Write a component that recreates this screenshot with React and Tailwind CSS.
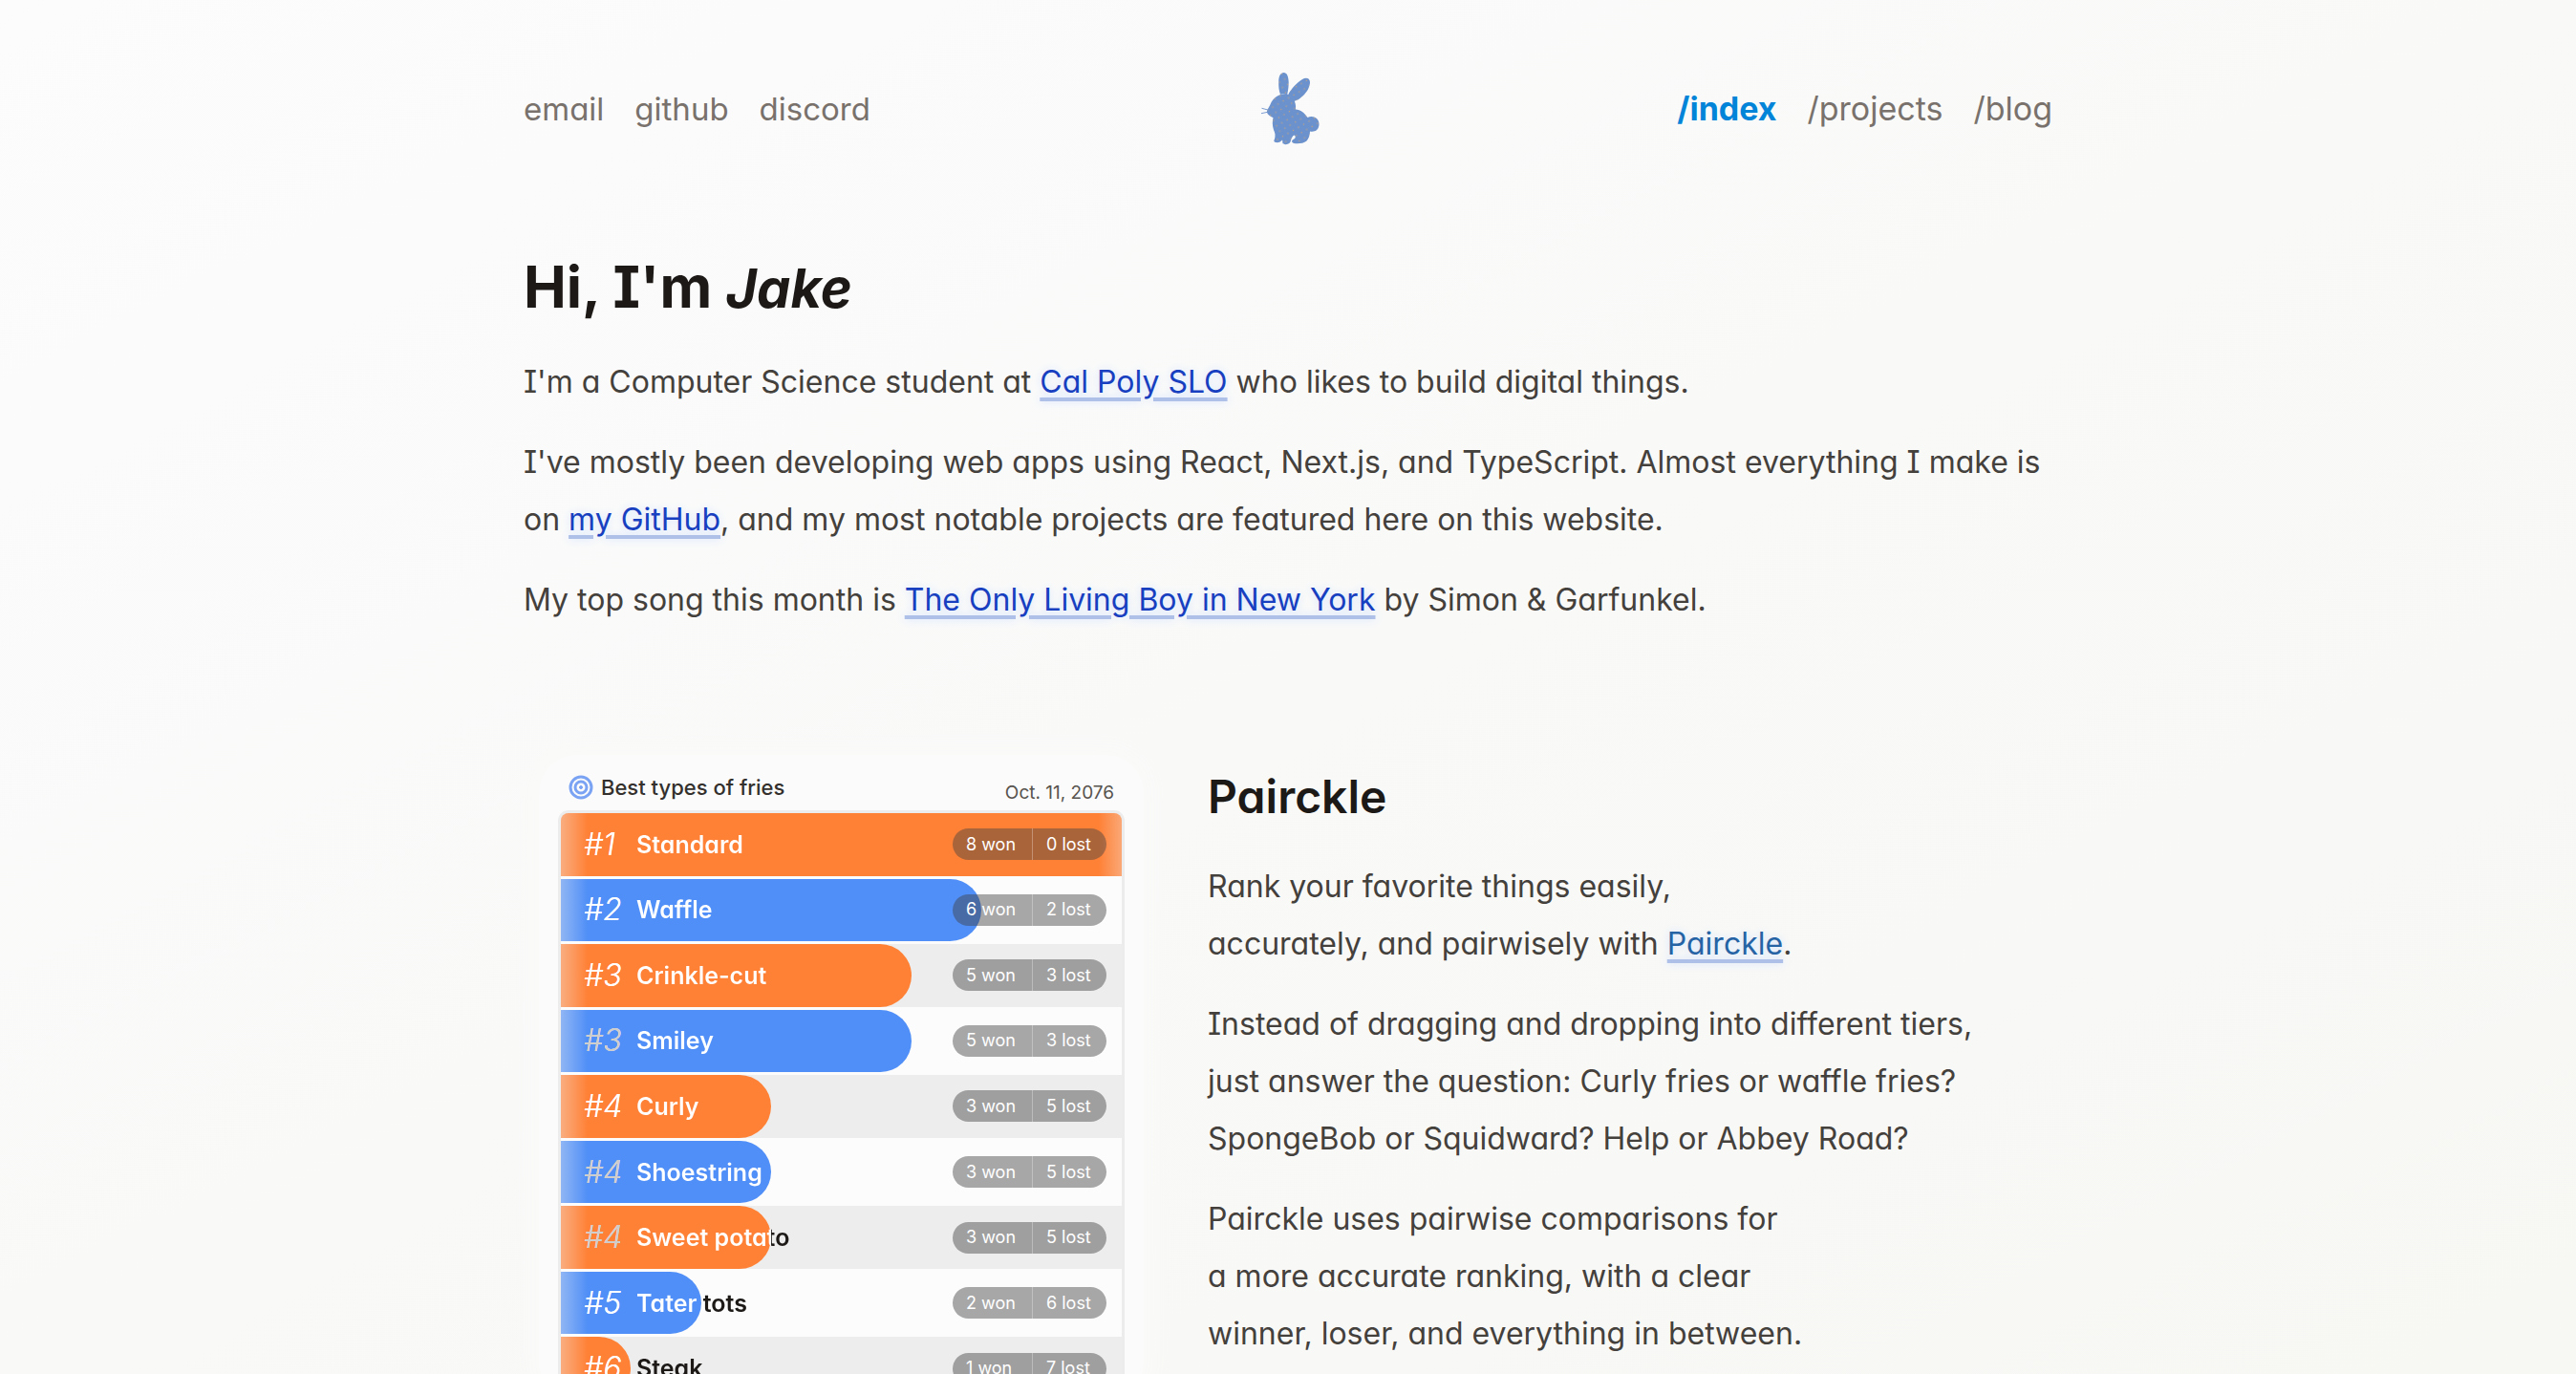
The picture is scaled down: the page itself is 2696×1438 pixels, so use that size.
import clsx from "clsx";

const fries = [
  { rank: 1, name: "Standard", won: 8 },
  { rank: 2, name: "Waffle", won: 6 },
  { rank: 3, name: "Crinkle-cut", won: 5 },
  { rank: 3, name: "Smiley", won: 5 },
  { rank: 4, name: "Curly", won: 3 },
  { rank: 4, name: "Shoestring", won: 3 },
  { rank: 4, name: "Sweet potato", won: 3 },
  { rank: 5, name: "Tater tots", won: 2 },
  { rank: 6, name: "Steak", won: 1 },
];

const ROUNDS = 8;

function Rabbit() {
  return (
    <svg viewBox="-2 0 100 100" className="size-[100px]" aria-hidden="true">
      <defs>
        <pattern id="dots" width="9" height="9" patternUnits="userSpaceOnUse" patternTransform="rotate(15)">
          <rect width="9" height="9" fill="#6c92cd" />
          <circle cx="2" cy="2" r="0.7" fill="#c4a27c" />
          <circle cx="6.5" cy="6.5" r="0.7" fill="#c4a27c" />
        </pattern>
      </defs>
      <g fill="url(#dots)" transform="translate(2 0)">
        <path d="M41.500 16C45 16 46.500 20 46.700 26C46.700 31 46 36 45 39.500C42 38 40 38 38 39C36.500 35 36 30 36.200 25C36.500 19.500 38 16 41.500 16Z" />
        <path d="M46 39.500C49 33 55 27 61 23C65 20.500 69 22 69 26C69 31 66 36 62 40C58.500 43.500 55 45.500 52 46C51 43 49 41 46 39.500Z" />
        <path d="M38 39C43 37 48.500 38.500 51.500 43C53.500 46.500 54.500 50 54 54.500C59 55 63.500 58 66.500 63C72 60.500 78.500 63.500 78.500 70C78.500 76 74 78.500 69 77.500C69 82 67.500 85 65.500 87.500C62 90.500 56 90.500 52 90C49.500 89 49.500 87 51.500 86C54 85 54.500 82.500 52.500 81.500C50.500 82 49.500 85 48.500 88.500C47 91.500 41.500 92 40.500 90C40 88.500 40.500 87 40 86.500C38.500 88.500 36 89.500 33 89C31 88.500 31 87 32 85.500C33 82 32.500 79 31 76C29.500 71 29.500 67 30.500 63C26.500 61.500 23.500 59 24 56C25 53 27 51 28.500 47C30.500 43.500 33.500 40.500 38 39Z" />
      </g>
      <path d="M27 55L20.500 53.300M26.500 57.300L20 58.700" stroke="#6c92cd" strokeWidth="0.9" fill="none" />
    </svg>
  );
}

function Target() {
  return (
    <svg viewBox="0 0 26 26" className="size-[26px] shrink-0" fill="none" stroke="#7ba3f3" aria-hidden="true">
      <circle cx="13" cy="13" r="11" strokeWidth="3" />
      <circle cx="13" cy="13" r="6" strokeWidth="3" />
      <circle cx="13" cy="13" r="1.500" fill="#7ba3f3" strokeWidth="1" />
    </svg>
  );
}

function TextLink({ href, className, children }) {
  return (
    <a
      href={href}
      className={clsx(
        "underline decoration-[#aec0e8] decoration-4 underline-offset-[5px] [text-shadow:0_0_10px_#cfe0ff]",
        className ?? "text-[#173fc0]"
      )}
    >
      {children}
    </a>
  );
}

function FriesRow({ fry, index }) {
  const odd = index % 2 === 1;
  const tied = index > 0 && fries[index - 1].rank === fry.rank;
  const full = fry.won === ROUNDS;
  const share = `${(fry.won / ROUNDS) * 100}%`;

  return (
    <li className={clsx("relative overflow-hidden", odd ? "bg-[#fcfcfc]" : "bg-[#ededed]")}>
      <div
        className={clsx(
          "absolute inset-y-0 left-0 overflow-hidden",
          odd ? "bg-[#508ff7]" : "bg-[#ff8136]",
          !full && "rounded-r-full"
        )}
        style={{ width: share }}
      >
        <div className="absolute inset-y-0 left-0 w-7 bg-linear-to-r from-[#f0f0f0]/40 to-transparent" />
        {full && <div className="absolute inset-y-0 right-0 w-6 bg-linear-to-l from-[#f0f0f0]/35 to-transparent" />}
      </div>
      {/* the name flips from white to black where the bar ends */}
      <div
        className="relative flex h-full items-center bg-clip-text pl-6 whitespace-nowrap text-transparent"
        style={{ backgroundImage: `linear-gradient(to right, #fff ${share}, #1c1917 ${share})` }}
      >
        <span
          className={clsx(
            "w-[55px] shrink-0 text-[32px] font-light italic",
            tied ? "text-[#cfcdcb]" : "text-white"
          )}
        >
          #{fry.rank}
        </span>
        <span className="text-[25px] font-semibold">{fry.name}</span>
      </div>
      <div className="absolute inset-y-0 right-4 flex items-center">
        <div className="flex h-[33px] items-center rounded-full bg-[#404040]/45 text-lg text-white">
          <span className="w-[83px] pl-3.5">{fry.won} won</span>
          <span className="flex h-full w-[78px] items-center border-l border-white/30 pl-3.5">
            {ROUNDS - fry.won} lost
          </span>
        </div>
      </div>
    </li>
  );
}

function FriesCard() {
  return (
    <div className="w-[633px] shrink-0 rounded-[40px] bg-[#fbfbfb] px-[23px] pt-[18px] shadow-[0_0_16px_12px_#fafaf9]">
      <div className="flex h-[43px] items-start justify-between px-2">
        <div className="flex items-center gap-2 text-[22px] leading-8 font-medium text-[#33302d]">
          <Target />
          Best types of fries
        </div>
        <div className="pt-1.5 text-[19px] leading-8 text-[#57534e]">Oct. 11, 2076</div>
      </div>
      <ol className="grid h-[614px] grid-rows-9 gap-[3px] overflow-hidden rounded-t-lg bg-[#fcfcfc] shadow-[0_0_0_3px_#ececec]">
        {fries.map((fry, i) => (
          <FriesRow key={fry.name} fry={fry} index={i} />
        ))}
      </ol>
    </div>
  );
}

export default function App() {
  return (
    <div className="h-screen overflow-hidden bg-linear-to-br from-[#fcfcfd] via-[#f9f9f8] to-[#f7f7f4] font-['Inter','Liberation_Sans',sans-serif] text-[32px] leading-[60px] text-[#44403c] [font-feature-settings:'cv08','cv11']">
      <div className="mx-auto max-w-[1600px]">
        <header className="grid grid-cols-[1fr_auto_1fr] items-center pt-[60px] text-[#78716c]">
          <nav className="flex gap-8 pt-2 text-[33px]" aria-label="Contact">
            <a href="#email">email</a>
            <a href="#github">github</a>
            <a href="#discord">discord</a>
          </nav>
          <a href="#home" aria-label="Home">
            <Rabbit />
          </a>
          <nav className="flex justify-end gap-8 pt-2 text-[34px]" aria-label="Pages">
            <a href="#index" className="font-bold text-[#0284d8]">/index</a>
            <a href="#projects">/projects</a>
            <a href="#blog">/blog</a>
          </nav>
        </header>

        <main>
          <section className="flex flex-col gap-6 pt-[104px]">
            <h1 className="mb-2 text-[60px] leading-[72px] font-bold text-[#1c1917]">
              Hi, I'm <span className="text-[56px] italic">Jake</span>
            </h1>
            <p>
              I'm a Computer Science student at <TextLink href="#calpoly">Cal Poly SLO</TextLink> who likes to build
              digital things.
            </p>
            <p>
              I've mostly been developing web apps using React, Next.js, and TypeScript. Almost everything I make is
              <br />
              on <TextLink href="#my-github">my GitHub</TextLink>, and my most notable projects are featured here on
              this website.
            </p>
            <p>
              My top song this month is <TextLink href="#song">The Only Living Boy in New York</TextLink> by Simon &
              Garfunkel.
            </p>
          </section>

          <section className="flex gap-[67px] pt-[132px] pl-4">
            <FriesCard />
            <div className="flex flex-col gap-6 pt-2">
              <h2 className="mb-1 text-5xl leading-[72px] font-semibold text-[#1c1917]">Pairckle</h2>
              <p>
                Rank your favorite things easily,
                <br />
                accurately, and pairwisely with{" "}
                <TextLink href="#pairckle" className="text-[#2563a5]">
                  Pairckle
                </TextLink>
                .
              </p>
              <p>
                Instead of dragging and dropping into different tiers,
                <br />
                just answer the question: Curly fries or waffle fries?
                <br />
                SpongeBob or Squidward? Help or Abbey Road?
              </p>
              <p>
                Pairckle uses pairwise comparisons for
                <br />
                a more accurate ranking, with a clear
                <br />
                winner, loser, and everything in between.
              </p>
            </div>
          </section>
        </main>
      </div>
    </div>
  );
}
